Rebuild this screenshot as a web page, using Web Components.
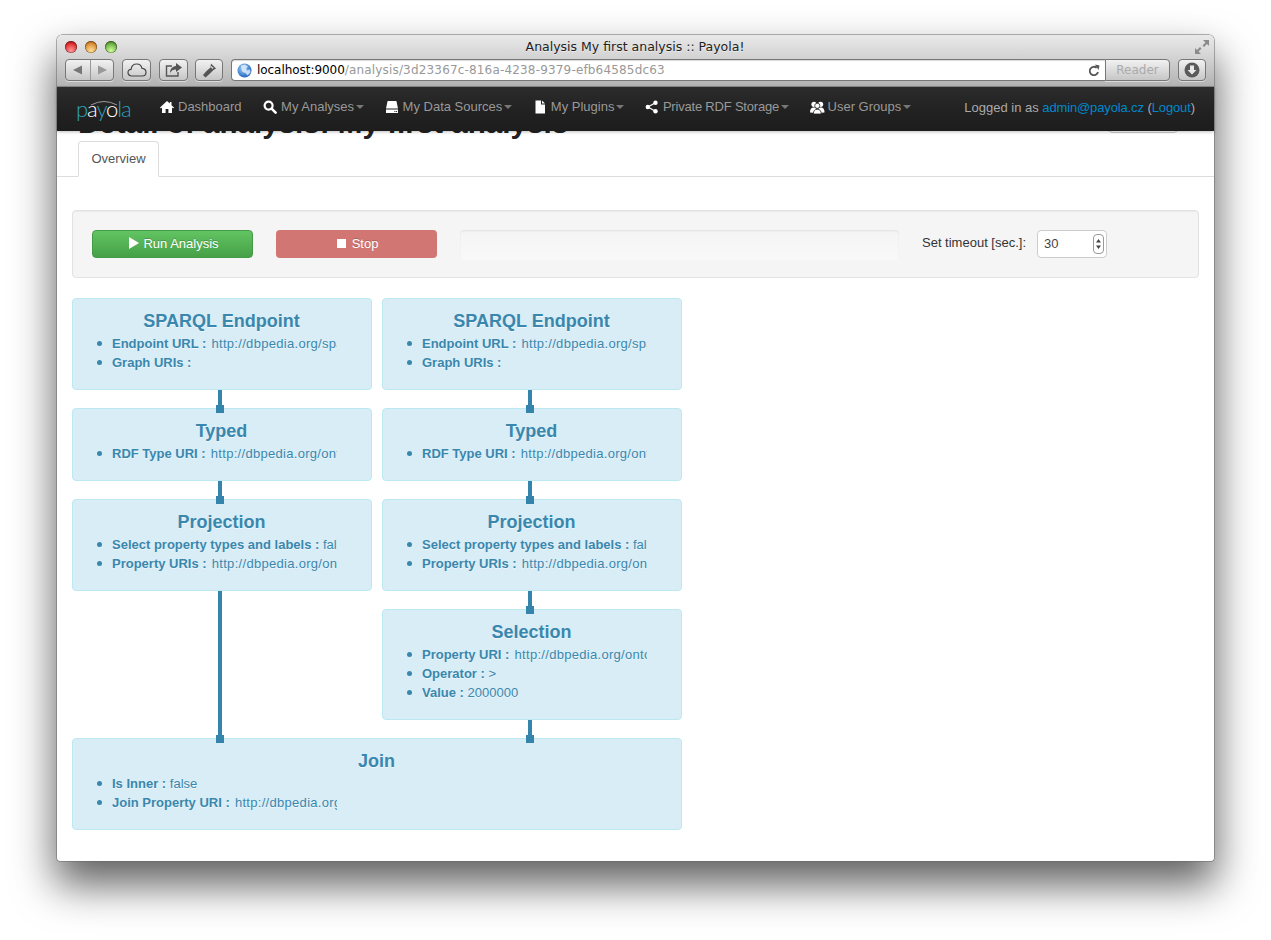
<!DOCTYPE html>
<html>
<head>
<meta charset="utf-8">
<title>Analysis My first analysis :: Payola!</title>
<style>
  html, body { margin: 0; background: #fff; }
  body { font: 13px "Liberation Sans", Arial, sans-serif; color: #333; }
</style>
</head>
<body>
<safari-window>
  <safari-toolbar slot="chrome"></safari-toolbar>
  <payola-navbar slot="chrome">
    <nav-item label="Dashboard" icon="home" plain style="margin-right:1px"></nav-item>
    <nav-item label="My Analyses" icon="search"></nav-item>
    <nav-item label="My Data Sources" icon="hdd"></nav-item>
    <nav-item label="My Plugins" icon="file"></nav-item>
    <nav-item label="Private RDF Storage" icon="share" style="letter-spacing:-.2px"></nav-item>
    <nav-item label="User Groups" icon="users"></nav-item>
  </payola-navbar>
  <page-header></page-header>
  <run-panel></run-panel>
  <analysis-graph>
    <graph-column slot="left">
      <plugin-box heading="SPARQL Endpoint">
        <plugin-param name="Endpoint URL" value="http://dbpedia.org/sparql"></plugin-param>
        <plugin-param name="Graph URIs" value=""></plugin-param>
      </plugin-box>
      <plugin-box heading="Typed">
        <box-pin slot="pins"></box-pin>
        <plugin-param name="RDF Type URI" value="http://dbpedia.org/ontology/City"></plugin-param>
      </plugin-box>
      <plugin-box heading="Projection">
        <box-pin slot="pins"></box-pin>
        <plugin-param name="Select property types and labels" value="false"></plugin-param>
        <plugin-param name="Property URIs" value="http://dbpedia.org/ontology/populationTotal"></plugin-param>
      </plugin-box>
    </graph-column>
    <graph-column slot="right">
      <plugin-box heading="SPARQL Endpoint">
        <plugin-param name="Endpoint URL" value="http://dbpedia.org/sparql"></plugin-param>
        <plugin-param name="Graph URIs" value=""></plugin-param>
      </plugin-box>
      <plugin-box heading="Typed">
        <box-pin slot="pins"></box-pin>
        <plugin-param name="RDF Type URI" value="http://dbpedia.org/ontology/Country"></plugin-param>
      </plugin-box>
      <plugin-box heading="Projection">
        <box-pin slot="pins"></box-pin>
        <plugin-param name="Select property types and labels" value="false"></plugin-param>
        <plugin-param name="Property URIs" value="http://dbpedia.org/ontology/populationTotal"></plugin-param>
      </plugin-box>
      <plugin-box heading="Selection">
        <box-pin slot="pins"></box-pin>
        <plugin-param name="Property URI" value="http://dbpedia.org/ontology/populationTotal"></plugin-param>
        <plugin-param name="Operator" value="&gt;"></plugin-param>
        <plugin-param name="Value" value="2000000"></plugin-param>
      </plugin-box>
    </graph-column>
    <plugin-box slot="join" heading="Join">
      <box-pin slot="pins" stem="147"></box-pin>
      <box-pin slot="pins" stem="18" x="454"></box-pin>
      <plugin-param name="Is Inner" value="false"></plugin-param>
      <plugin-param name="Join Property URI" value="http://dbpedia.org/ontology/country"></plugin-param>
    </plugin-box>
  </analysis-graph>
</safari-window>

<script>
// all elements set their shadow markup from a string, nothing fancy
class Base extends HTMLElement {
  render(html) {
    if (!this.shadowRoot) this.attachShadow({mode: 'open'})
    this.shadowRoot.innerHTML = html
  }
  connectedCallback() {
    this.render(this.markup())
  }
}

const ICONS = {
  home: '<path fill="#fff" d="M7 1 0 7.6l.9 1L2 7.6V13h3.6V9h2.8v4H12V7.6l1.1 1 .9-1L11.5 5.2V2H9.8v1.6z"/>',
  search: '<circle cx="5.6" cy="5.6" r="4" fill="none" stroke="#fff" stroke-width="2.2"/><path d="m8.6 8.6 4 4" stroke="#fff" stroke-width="2.6" stroke-linecap="round"/>',
  hdd: '<path fill="#fff" d="M2.6 1h8.8l1.6 7.5H1zM1 9.5h12V13H1z"/><path fill="#222" d="M9.4 11h1v1h-1zm1.7 0h1v1h-1z"/>',
  file: '<path fill="#fff" d="M2.5 0.5h5.5v4h4v9h-9.500z"/><path fill="#fff" d="M9 .5l3 3H9z"/>',
  share: '<circle cx="2.8" cy="7" r="2.200" fill="#fff"/><circle cx="10.500" cy="2.800" r="2.200" fill="#fff"/><circle cx="10.500" cy="11.200" r="2.200" fill="#fff"/><path d="M2.800 7l7.700-4.200M2.800 7l7.700 4.200" stroke="#fff" stroke-width="1.300"/>',
  users: '<circle cx="4" cy="4.300" r="2.600" fill="#fff"/><circle cx="10.600" cy="4.300" r="2.600" fill="#fff"/><path fill="#fff" d="M0 12.500c0-3 1-4.500 3-5h2l1 1 .5 4.500zM14.500 12.500c0-3-1-4.500-3-5h-2l-1 1-.5 4.500z"/><circle cx="7.300" cy="5.800" r="2.600" fill="#fff" stroke="#222" stroke-width=".8"/><path fill="#fff" stroke="#222" stroke-width=".8" d="M3.300 14c0-3 1.500-4.800 4-4.800s4 1.800 4 4.800z"/>'
}

customElements.define('safari-window', class extends Base {
  markup() {
    return `<style>
      :host {
        display: block; width: 1157px; height: 826px; margin: 35px 0 79px 57px;
        background: #fff; border-radius: 5px 5px 3px 3px; position: relative;
        box-shadow: 0 0 0 .5px #666, 0 22px 42px 2px rgba(0,0,0,.62);
      }
      .chrome { position: relative; z-index: 2; }
      .page { height: 730px; overflow: hidden; }
    </style>
    <div class="chrome"><slot name="chrome"></slot></div>
    <div class="page"><slot></slot></div>`
  }
})

customElements.define('safari-toolbar', class extends Base {
  markup() {
    return `<style>
      :host {
        display: flex; flex-direction: column; height: 52px; box-sizing: border-box;
        border-radius: 5px 5px 0 0; border-bottom: 1px solid #8a8a8a;
        background: linear-gradient(#e9e9e9, #d5d5d5 40%, #b3b3b3);
        font-family: "DejaVu Sans", sans-serif;
      }
      .title { display: flex; align-items: center; height: 23px; padding: 0 4px 0 7px; }
      .lights { display: flex; gap: 8px; margin-left: 1px; }
      .lights i { width: 12px; height: 12px; border-radius: 50%; box-shadow: inset 0 0 0 .5px rgba(0,0,0,.45), inset 0 1px 2px rgba(0,0,0,.3); }
      .r { background: radial-gradient(circle at 50% 80%, #f99, #d22 70%); }
      .y { background: radial-gradient(circle at 50% 80%, #fd9, #d8862a 70%); }
      .g { background: radial-gradient(circle at 50% 80%, #cf9, #62a53a 70%); }
      .name { flex: 1; text-align: center; font-size: 12.5px; color: #222; text-shadow: 0 1px 0 rgba(255,255,255,.5); margin-right: 41px; white-space: nowrap; }
      .tools { display: flex; align-items: center; height: 22px; padding: 1px 8px 0 8px; }
      .btn {
        display: flex; align-items: center; justify-content: center; height: 22px; box-sizing: border-box;
        border: 1px solid #777; border-radius: 4px; background: linear-gradient(#f2f2f2, #c6c6c6);
        box-shadow: 0 1px 0 rgba(255,255,255,.5);
      }
      .nav i { width: 1px; height: 20px; background: #999; margin: 0 5px 0 6px; }
      .address {
        flex: 1; height: 22px; box-sizing: border-box; display: flex; align-items: center;
        border: 1px solid #777; border-right: 0; border-radius: 4px 0 0 4px; background: #fff;
        padding: 0 5px 0 5px; margin-left: 8px; font-size: 12px; white-space: nowrap;
        box-shadow: inset 0 1px 1px rgba(0,0,0,.15);
      }
      .address b { font-weight: 400; color: #000; margin-left: 5px; letter-spacing: -.05px; }
      .address span { color: #999; flex: 1; letter-spacing: .17px; }
      .reader { width: 65px; border-radius: 0 4px 4px 0; font-size: 12px; color: #aaa; }
    </style>
    <div class="title">
      <div class="lights"><i class="r"></i><i class="y"></i><i class="g"></i></div>
      <div class="name">Analysis My first analysis :: Payola!</div>
      <svg width="16" height="16" viewBox="0 0 16 16"><path fill="#8a8a8a" d="M9 1h6v6l-2-2-3 3-1.500-1.500 3-3zM7 15H1V9l2 2 3-3 1.500 1.500-3 3z"/></svg>
    </div>
    <div class="tools">
      <div class="btn nav" style="width:49px">
        <svg width="13" height="12" viewBox="0 0 13 12"><path fill="#777" d="M2 6l9-4.500v9z"/></svg>
        <i></i>
        <svg width="13" height="12" viewBox="0 0 13 12"><path fill="#999" d="M11 6L2 1.500v9z"/></svg>
      </div>
      <div class="btn" style="width:29px; margin-left:8px">
        <svg width="20" height="14" viewBox="0 0 20 14"><path fill="none" stroke="#444" stroke-width="1.200" d="M5 13C2.500 13 1 11.500 1 9.500 1 7.500 2.500 6.300 4 6.300 4.500 3 7 1 9.800 1c2.700 0 4.700 1.800 5.200 4.300 2.200.2 4 1.700 4 3.900 0 2.300-1.700 3.800-3.800 3.800z"/></svg>
      </div>
      <div class="btn" style="width:29px; margin-left:8px">
        <svg width="18" height="14" viewBox="0 0 18 14"><path fill="none" stroke="#555" stroke-width="1.400" d="M13 9v4H1.500V3H7"/><path fill="#555" d="M11 0l6 4.500-6 4.500V6.500C8 6.500 6.500 7.500 5 10c0-4 2-6.500 6-7z"/></svg>
      </div>
      <div class="btn" style="width:28px; margin-left:7px">
        <svg width="15" height="15" viewBox="0 0 15 15"><path fill="#555" d="M9 .5l5 5-2.500 1.500L7.500 11l-4 3.500-2.500-2.500L4.500 8l4-3.500z"/><path fill="#ddd" d="M9.500 3l2 2-1 1-2-2z"/></svg>
      </div>
      <div class="address">
        <svg width="15" height="15" viewBox="0 0 15 15"><defs><radialGradient id="gl" cx=".4" cy=".35" r=".7"><stop offset="0" stop-color="#9fd0f5"/><stop offset="1" stop-color="#1a5fbd"/></radialGradient></defs><circle cx="7.500" cy="7.500" r="7" fill="url(#gl)"/><path fill="#dfeafa" opacity=".85" d="M4 2.500l4-1 3 2-2 2 1 2 3-1 .5 3-3 3-2-2.500-3-1-1-3z"/></svg>
        <b>localhost:9000</b><span>/analysis/3d23367c-816a-4238-9379-efb64585dc63</span>
        <svg width="12" height="13" viewBox="0 0 12 13"><path fill="none" stroke="#555" stroke-width="1.800" d="M10 8a4.200 4.200 0 1 1-1.300-4.200"/><path fill="#555" d="M7 .5l4.500 1-1 4.500z"/></svg>
      </div>
      <div class="btn reader">Reader</div>
      <div class="btn" style="width:28px; margin-left:8px">
        <svg width="16" height="16" viewBox="0 0 16 16"><circle cx="8" cy="8" r="7.500" fill="#5a5a5a"/><path fill="#e8e8e8" d="M6 3.500h4V8h2.500L8 12.500 3.500 8H6z"/></svg>
      </div>
    </div>`
  }
})

customElements.define('payola-navbar', class extends Base {
  markup() {
    return `<style>
      :host {
        display: flex; align-items: center; height: 44px; box-sizing: border-box; padding: 0 19px 5px 20px;
        background: linear-gradient(#2c2c2c, #222 50%, #1d1d1d);
        box-shadow: 0 1px 3px rgba(0,0,0,.25);
      }
      .logo { width: 84px; margin-left: -1px; font: 300 22px Lato, sans-serif; color: #2ba3bd; letter-spacing: -1.100px; position: relative; top: 2px; }
      .logo b { font-weight: 300; color: #fff; }
      .logo svg { position: absolute; left: 14px; top: 3px; }
      nav { display: flex; gap: 20.500px; flex: 1; }
      .user { color: #aaa; white-space: nowrap; font-size: 13px; position: relative; top: 1px; }
      a { color: #0088cc; text-decoration: none; letter-spacing: -.14px; }
    </style>
    <div class="logo">p<b>a</b>y<b>o</b>la<svg width="28" height="8" viewBox="0 0 28 8"><path d="M1 7Q14 0 27 7" fill="none" stroke="#999" stroke-width="1"/></svg></div>
    <nav><slot></slot></nav>
    <div class="user">Logged in as <a>admin@payola.cz</a> (<a>Logout</a>)</div>`
  }
})

customElements.define('nav-item', class extends Base {
  markup() {
    const caret = this.hasAttribute('plain') ? '' : '<i></i>'
    return `<style>
      :host { display: flex; align-items: center; color: #999; font-size: 13px; white-space: nowrap; }
      svg { margin-right: 3px; }
      i { width: 0; height: 0; margin: 1px 0 0 2px; border: 4px solid transparent; border-top-color: #777; border-bottom: 0; }
    </style>
    <svg width="15" height="14" viewBox="0 0 15 14">${ICONS[this.getAttribute('icon')]}</svg>
    <span>${this.getAttribute('label')}</span>${caret}`
  }
})

customElements.define('page-header', class extends Base {
  markup() {
    return `<style>
      :host { display: block; margin-top: -17px; }
      .head { display: flex; align-items: flex-end; height: 27px; padding: 0 36px 0 21px; position: relative; }
      h1 { margin: 0; flex: 1; font: bold 29.600px/36px "Liberation Sans", sans-serif; color: #222; white-space: nowrap; }
      .back { width: 70px; height: 30px; box-sizing: border-box; border: 1px solid #ccc; border-radius: 4px; margin-bottom: 8px; }
      .tabs { display: flex; height: 36px; box-sizing: border-box; margin-top: 0; padding-left: 21px; border-bottom: 1px solid #ddd; }
      .tab {
        height: 36px; width: 81px; box-sizing: border-box; display: flex; align-items: center; justify-content: center; padding-bottom: 2px;
        border: 1px solid #ddd; border-bottom-color: #fff; border-radius: 4px 4px 0 0; background: #fff; color: #555;
      }
    </style>
    <div class="head"><h1>Detail of analysis: My first analysis</h1><div class="back"></div></div>
    <div class="tabs"><div class="tab">Overview</div></div>`
  }
})

customElements.define('run-panel', class extends Base {
  markup() {
    return `<style>
      :host {
        display: flex; align-items: flex-start; height: 68px; box-sizing: border-box; margin: 33px 15px 0 15px; padding: 19px;
        background: #f5f5f5; border: 1px solid #e3e3e3; border-radius: 4px; box-shadow: inset 0 1px 1px rgba(0,0,0,.05);
      }
      .btn {
        width: 161px; height: 28px; box-sizing: border-box; display: flex; align-items: center; justify-content: center; gap: 4px;
        border-radius: 4px; color: #fff; font-size: 13px; text-shadow: 0 -1px 0 rgba(0,0,0,.2); padding: 0 0 2px 3px;
      }
      .run { background: linear-gradient(#62c462, #46a046); border: 1px solid #459a45; }
      .stop { background: #d17672; margin-left: 23px; gap: 5px; padding-left: 2px; }
      .progress {
        width: 439px; height: 30px; margin-left: 23px; border-radius: 4px;
        background: linear-gradient(#f4f4f4, #f9f9f9); box-shadow: inset 0 1px 2px rgba(0,0,0,.08);
      }
      label { margin-left: 23px; line-height: 25px; color: #333; white-space: nowrap; }
      .num {
        display: flex; align-items: center; justify-content: space-between; width: 70px; height: 28px; box-sizing: border-box;
        margin-left: 11px; padding: 0 2px 0 6px; background: #fff; border: 1px solid #ccc; border-radius: 4px; color: #444; font-size: 13px;
      }
      .num span { position: relative; top: -1px; }
      .spin { width: 9px; height: 18px; border: 1px solid #999; border-radius: 4px; }
    </style>
    <div class="btn run"><svg width="10" height="12" viewBox="0 0 10 12"><path fill="#fff" d="M0 0l10 6-10 6z"/></svg>Run Analysis</div>
    <div class="btn stop"><svg width="10" height="10"><rect width="9" height="9" y="1" fill="#fff"/></svg>Stop</div>
    <div class="progress"></div>
    <label>Set timeout [sec.]:</label>
    <div class="num"><span>30</span><svg class="spin" viewBox="0 0 9 18"><path fill="#444" d="M4.500 4l2.500 3.500H2zM4.500 14L2 10.500h5z"/></svg></div>`
  }
})

customElements.define('analysis-graph', class extends Base {
  markup() {
    return `<style>
      :host {
        display: grid; grid-template-columns: 300px 300px; column-gap: 10px; row-gap: 18px;
        width: 610px; margin: 20px 0 0 15px; align-items: start;
      }
      .join { grid-column: 1 / 3; }
    </style>
    <slot name="left"></slot><slot name="right"></slot>
    <div class="join"><slot name="join"></slot></div>`
  }
})

customElements.define('graph-column', class extends Base {
  markup() {
    return `<style>:host { display: flex; flex-direction: column; gap: 18px; }</style><slot></slot>`
  }
})

customElements.define('plugin-box', class extends Base {
  markup() {
    return `<style>
      :host {
        display: block; position: relative; box-sizing: border-box; padding: 10px 0 17px 0;
        background: #d9edf7; border: 1px solid #bce8f1; border-radius: 4px; color: #3a87ad;
        text-shadow: 0 1px 0 rgba(255,255,255,.5);
      }
      h4 { margin: 0 0 1px 0; font: bold 18px/24px "Liberation Sans", sans-serif; text-align: center; padding-right: 1px; }
    </style>
    <slot name="pins"></slot>
    <h4>${this.getAttribute('heading')}</h4>
    <slot></slot>`
  }
})

// connector end: stem comes from the box above, square bites into this box
customElements.define('box-pin', class extends Base {
  markup() {
    const stem = +(this.getAttribute('stem') || 18)
    const x = +(this.getAttribute('x') || 144)
    return `<style>
      :host { position: absolute; left: ${x - 1}px; top: -1px; width: 8px; height: 0; }
      .stem { position: absolute; left: 2px; top: ${-stem}px; width: 4px; height: ${stem}px; background: #3584ab; }
      .end { position: absolute; left: 0; top: -3px; width: 8px; height: 8px; background: #3584ab; }
    </style>
    <div class="stem"></div><div class="end"></div>`
  }
})

customElements.define('plugin-param', class extends Base {
  markup() {
    const value = this.getAttribute('value')
    const cls = value.startsWith('http') ? 'url' : ''
    return `<style>
      :host { display: flex; align-items: center; height: 19px; width: 264px; font-size: 13px; }
      i { flex: none; width: 5px; height: 5px; margin: 0 10.500px 0 23.500px; border-radius: 50%; background: #3a87ad; }
      div { flex: none; width: 225px; overflow: hidden; white-space: nowrap; }
      .url { letter-spacing: .3px; margin-left: 1.500px; }
    </style>
    <i></i><div><b>${this.getAttribute('name')} :</b> <span class="${cls}">${value.replace('>', '&gt;')}</span></div>`
  }
})
</script>
</body>
</html>
